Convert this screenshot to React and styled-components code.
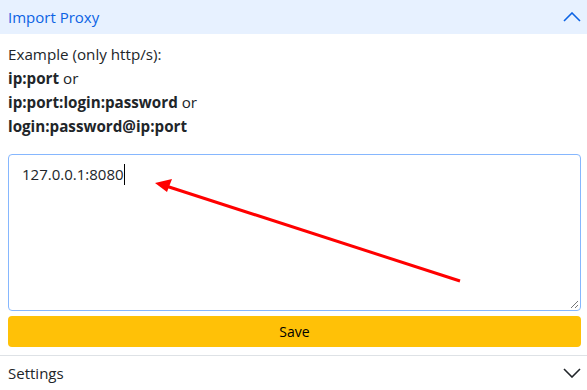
import styled, { createGlobalStyle } from 'styled-components';

const Global = createGlobalStyle`
  body {
    margin: 0;
    font-family: 'Open Sans', 'Noto Sans', sans-serif;
    color: #212529;
    background: #fff;
  }
`;

const Page = styled.div`
  position: relative;
  width: 587px;
  height: 390px;
  overflow: hidden;
`;

const Header = styled.div`
  height: 34px;
  display: flex;
  align-items: center;
  justify-content: space-between;
  padding: 0 6px 0 8px;
  font-size: 15px;
  background: ${({ open }) => (open ? '#e7f1ff' : '#fff')};
  color: ${({ open }) => (open ? '#0c63e4' : '#212529')};
  border-top: ${({ open }) => (open ? 'none' : '1px solid #dee2e6')};
`;

const Body = styled.div`
  padding: 8px 6px 8px 8px;
  display: flex;
  flex-direction: column;
`;

const Hint = styled.div`
  font-size: 15.2px;
  line-height: 24px;
  margin-bottom: 16px;
  b {
    font-weight: 700;
  }
`;

const FakeArea = styled.div`
  position: relative;
  height: 157px;
  box-sizing: border-box;
  border: 1px solid #86b7fe;
  border-radius: 4px;
  padding: 7px 13px;
  font-size: 15px;
  line-height: 24px;
`;

const Caret = styled.span`
  display: inline-block;
  width: 1px;
  height: 21px;
  background: #000;
  vertical-align: -5px;
`;

const Grip = styled.svg`
  position: absolute;
  right: 1px;
  bottom: 1px;
`;

const SaveButton = styled.button`
  margin-top: 5px;
  height: 31px;
  border: none;
  border-radius: 4px;
  background: #ffc107;
  color: #000;
  font-family: inherit;
  font-size: 14px;
`;

const Overlay = styled.svg`
  position: absolute;
  left: 0;
  top: 0;
  pointer-events: none;
`;

function Chevron({ up, color }) {
  return (
    <svg width="18" height="10" viewBox="0 0 18 10">
      <path
        d={up ? 'M1 9 L9 1 L17 9' : 'M1 1 L9 9 L17 1'}
        fill="none"
        stroke={color}
        strokeWidth="1.6"
      />
    </svg>
  );
}

export default function App() {
  return (
    <Page>
      <Global />
      <Header open>
        <span>Import Proxy</span>
        <Chevron up color="#0c63e4" />
      </Header>
      <Body>
        <Hint>
          Example (only http/s):
          <br />
          <b>ip:port</b> or
          <br />
          <b>ip:port:login:password</b> or
          <br />
          <b>login:password@ip:port</b>
        </Hint>
        <FakeArea>
          127.0.0.1:8080
          <Caret />
          <Grip width="10" height="10" viewBox="0 0 10 10">
            <path d="M9 2 L2 9 M9 6 L6 9" stroke="#777" strokeWidth="1" />
          </Grip>
        </FakeArea>
        <SaveButton>Save</SaveButton>
      </Body>
      <Header>
        <span>Settings</span>
        <Chevron color="#212529" />
      </Header>
      <Overlay width="587" height="390">
        <line x1="460" y1="281" x2="166" y2="186" stroke="#f00" strokeWidth="3" />
        <polygon points="155,183 172,179 167,192" fill="#f00" />
      </Overlay>
    </Page>
  );
}
